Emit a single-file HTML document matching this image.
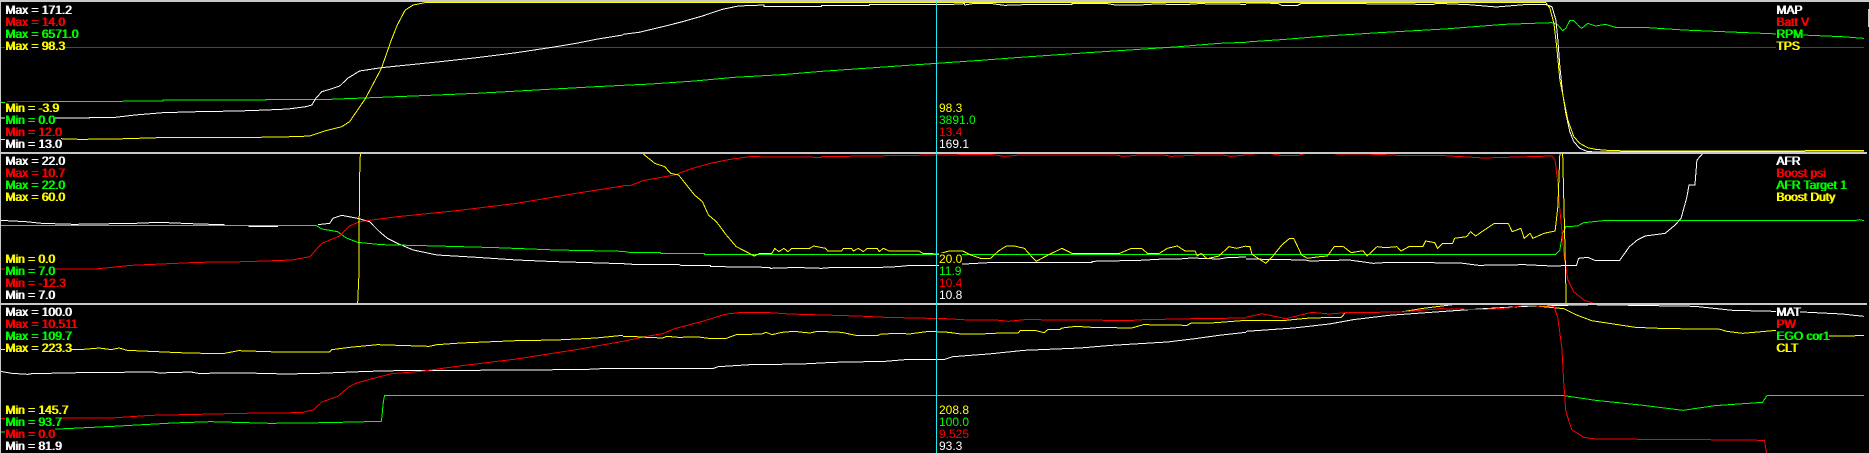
<!DOCTYPE html>
<html><head><meta charset="utf-8"><style>
html,body{margin:0;padding:0;background:#000;width:1869px;height:453px;overflow:hidden}
svg{position:absolute;left:0;top:0}
polyline{fill:none;stroke-width:1;vector-effect:non-scaling-stroke;stroke-linejoin:round}
.w{stroke:#fff}.r{stroke:#f00}.g{stroke:#0f0}.y{stroke:#ff0}
div{position:absolute;font:12px/12px "Liberation Sans",sans-serif;background:#000;white-space:pre;height:12px}
.l{left:5px;text-shadow:1px 0 0 currentColor}
.c{left:939px}
.t{left:1776px;text-shadow:1px 0 0 currentColor}
.W{color:#fff}.R{color:#f00}.G{color:#0f0}.Y{color:#ff0}
</style></head><body>
<svg width="1869" height="453" shape-rendering="crispEdges">
<clipPath id="p1"><rect x="1" y="2" width="1863" height="150"/></clipPath>
<clipPath id="p2"><rect x="1" y="154" width="1863" height="149"/></clipPath>
<clipPath id="p3"><rect x="1" y="305" width="1863" height="148"/></clipPath>

<g clip-path="url(#p1)">
<line x1="1" y1="47.5" x2="1864" y2="47.5" stroke="#e00" stroke-width="1"/>
<g transform="translate(0,0) scale(.39730,.33333)">
<polyline class="g" points="0,307 145,305 410,303 410,300 670,300 670,298 830,298 1000,290 1200,280 1350,270 1500,260 1568,256"/>
<polyline class="w" points="0,354 225,354 225,352 290,352 340,345 410,338 500,335 600,333 670,330 725,327 770,320 785,315 795,295 810,275 830,268 855,258 875,235 905,213 960,203 1100,186 1200,173 1300,158 1400,140 1450,130 1500,118 1568,105"/>
<polyline class="y" points="0,418 150,416 200,418 290,417 400,413 500,413 600,413 740,410 780,408 820,392 860,380 880,365 900,330 920,295 960,205 985,120 1000,75 1020,30 1040,15 1070,8 1568,8"/>
</g>
<g transform="translate(623,0) scale(.39730,.33333)">
<polyline class="g" points="0,256 70,252 180,243 280,232 400,224 500,214 620,204 790,190 900,181 1000,172 1170,158 1300,148 1400,140 1500,130 1568,127"/>
<polyline class="w" points="0,103 40,97 100,80 150,65 200,48 250,28 290,18 355,15 355,20 500,20 500,16 620,16 620,13 790,13 830,13 860,11 860,15 880,11 930,11 960,16 1010,14 1130,14 1130,11 1220,11 1240,15 1300,15 1340,12 1410,14 1450,11 1568,13"/>
<polyline class="y" points="0,8 1568,8"/>
</g>
<g transform="translate(1246,0) scale(.39730,.33333)">
<polyline class="g" points="0,126 100,118 200,108 350,97 500,87 650,73 770,68 785,75 797,92 805,85 815,62 825,62 835,75 845,85 860,70 880,78 905,73 930,82 1000,82 1100,90 1200,95 1300,100 1400,105 1500,110 1555,115"/>
<polyline class="w" points="0,9 80,10 90,16 130,16 140,10 400,12 470,14 480,10 560,14 630,21 700,14 755,14 770,20 780,60 785,120 790,200 797,280 805,340 815,395 825,425 840,445 860,455 900,456 1555,456"/>
<polyline class="y" points="0,8 755,8 765,25 775,70 782,140 790,240 800,300 810,360 825,410 840,430 860,443 880,448 920,452 1000,453 1555,452"/>
</g>
</g>

<g clip-path="url(#p2)">
<g transform="translate(0,150) scale(.39730,.33333)">
<polyline class="w" points="0,211 65,215 105,220 185,223 340,220 400,217 500,222 565,224"/>
<polyline class="w" points="625,229 700,229"/>
<polyline class="w" points="800,224 830,220 838,205 860,196 900,205 930,215 955,245 975,265 1000,280 1040,300 1100,315 1200,322 1300,330 1400,335 1568,341"/>
<polyline class="g" points="0,226 795,226 810,237 850,245 870,263 900,277 960,284 1100,288 1250,293 1400,300 1568,304"/>
<polyline class="r" points="0,357 240,357 330,346 500,337 620,335 735,330 780,320 810,280 855,258 880,228 905,215 1000,200 1150,182 1300,160 1450,130 1568,108"/>
<polyline class="y" points="1568,11 907,11 905,85 903,385 900,465"/>
</g>
<g transform="translate(623,150) scale(.39730,.33333)">
<polyline class="g" points="0,304 15,307 95,307 95,310 205,310 205,313 1568,313"/>
<polyline class="w" points="0,341 25,343 140,343 145,346 220,346 220,349 280,351 370,352 370,355 420,353 450,353 500,355 530,352 650,352 690,350 725,346 795,346 860,342 920,338 1180,338 1180,334 1300,331 1360,327 1400,327 1430,324 1500,327 1520,323 1568,321"/>
<polyline class="r" points="0,106 20,106 50,92 130,75 170,57 220,40 270,28 320,20 500,22 500,20 790,15 860,14 930,14 960,19 1000,15 1240,15 1260,19 1300,15 1360,15 1380,19 1450,15 1510,15 1530,19 1568,15"/>
<polyline class="y" points="0,11 50,11 80,40 105,50 120,70 140,75 160,105 180,135 200,155 215,195 235,215 260,255 285,290 310,305 330,318 345,310 375,310 382,295 392,305 405,295 415,305 425,295 470,295 480,288 510,295 515,303 550,303 555,295 575,295 580,303 592,295 605,305 615,295 640,295 645,305 655,295 670,303 745,303 755,310 795,312 820,303 855,303 875,315 900,325 925,325 945,303 965,288 985,288 1010,295 1025,315 1040,334 1070,315 1105,295 1130,310 1250,310 1280,295 1305,295 1320,310 1350,310 1370,295 1395,288 1415,303 1440,303 1445,318 1455,310 1470,326 1500,318 1525,290 1545,295 1568,288"/>
</g>
<g transform="translate(1246,150) scale(.39730,.33333)">
<polyline class="g" points="0,313 780,313 790,300 797,250 805,230 835,228 850,218 900,212 1530,212 1545,209 1555,212"/>
<polyline class="w" points="0,327 150,330 160,333 260,330 320,340 360,337 540,339 585,346 700,344 770,348 832,346 837,325 860,322 880,332 940,332 965,290 985,270 1005,258 1055,250 1080,225 1095,205 1110,140 1115,105 1130,105 1135,30 1150,10"/>
<polyline class="r" points="0,12 60,10 90,17 130,17 150,10 330,13 400,17 500,17 600,24 770,18 778,30 785,100 790,180 795,240 800,310 810,390 825,425 850,450 875,460"/>
<polyline class="y" points="0,290 10,290 15,313 50,340 70,315 90,285 110,265 120,265 140,315 155,325 185,320 205,318 222,290 245,290 265,308 290,303 295,303 305,318 330,290 350,293 380,290 390,303 410,290 445,290 452,273 475,278 482,295 495,280 520,280 525,265 555,260 565,245 578,258 600,240 625,220 660,220 670,245 692,235 700,265 715,250 722,265 750,250 778,243 785,170 790,10 797,10 803,300 806,465"/>
</g>
</g>

<g clip-path="url(#p3)">
<g transform="translate(0,298) scale(.39730,.33333)">
<polyline class="w" points="0,220 30,226 70,229 80,227 200,224 385,222 400,225 480,222 500,226 620,225 720,228 800,226 930,220 1000,218 1340,216 1480,214 1530,211 1568,211"/>
<polyline class="g" points="0,402 130,394 285,385 435,375 530,371 680,376 820,374 960,370 965,310 968,292 1568,292"/>
<polyline class="r" points="0,361 280,360 380,352 500,349 650,345 760,344 790,335 810,312 850,295 880,265 900,254 950,238 985,227 1060,220 1150,205 1300,183 1450,155 1568,130"/>
<polyline class="y" points="0,155 200,155 250,150 280,155 300,150 320,157 470,165 560,167 570,165 600,158 700,162 830,162 835,155 880,148 950,140 1080,145 1100,140 1160,135 1300,128 1400,126 1500,120 1568,112"/>
</g>
<g transform="translate(623,298) scale(.39730,.33333)">
<polyline class="g" points="0,292 1568,292"/>
<polyline class="w" points="0,211 228,211 240,206 320,200 450,198 530,193 660,190 710,185 810,184 830,176 920,168 1010,157 1150,150 1230,142 1370,132 1440,122 1500,112 1568,103"/>
<polyline class="r" points="0,130 60,115 100,107 130,92 200,70 260,48 300,43 355,43 420,48 590,54 660,58 810,62 870,66 940,66 970,70 1010,65 1170,66 1270,68 1310,65 1440,62 1568,60"/>
<polyline class="y" points="0,115 20,115 60,118 100,120 110,115 140,118 190,117 215,121 260,121 285,110 350,108 360,103 375,110 400,103 430,100 470,105 490,100 550,103 590,113 640,113 650,108 700,106 720,108 770,100 820,103 850,108 900,108 950,105 995,105 1000,97 1040,98 1060,104 1070,94 1100,94 1105,90 1140,85 1180,88 1280,90 1310,80 1420,82 1430,75 1480,75 1568,67"/>
</g>
<g transform="translate(1246,298) scale(.39730,.33333)">
<polyline class="g" points="0,292 795,292 880,307 1000,322 1100,337 1180,323 1300,313 1312,292 1555,292"/>
<polyline class="w" points="0,100 120,90 210,78 270,65 360,52 500,40 600,32 700,25 870,20 1130,25 1225,37 1400,42 1500,48 1555,55"/>
<polyline class="y" points="0,67 100,67 160,60 240,58 250,44 390,42 440,32 520,20 640,20 680,18 800,32 830,50 870,68 980,88 1060,92 1190,93 1210,100 1250,106 1335,97 1470,114 1555,113"/>
<polyline class="r" points="0,58 40,47 100,62 165,43 210,48 250,44 390,42 490,32 590,35 660,30 700,22 775,25 785,60 795,150 800,260 805,340 820,395 850,418 880,423 1150,425 1305,427 1310,465"/>
</g>
</g>

<rect x="0" y="0" width="1869" height="2" fill="#c8c8c8"/>
<rect x="0" y="152" width="1867" height="2" fill="#c8c8c8"/>
<rect x="0" y="303" width="1867" height="2" fill="#c8c8c8"/>
<rect x="0" y="0" width="1" height="453" fill="#c8c8c8"/>
<rect x="1868" y="9" width="1" height="18" fill="#c8c8c8"/>
<rect x="936" y="2" width="1" height="451" fill="#20e8f0"/>
</svg>

<div class="l W" style="top:4px">Max = 171.2</div>
<div class="l R" style="top:16px">Max = 14.0</div>
<div class="l G" style="top:28px">Max = 6571.0</div>
<div class="l Y" style="top:40px">Max = 98.3</div>
<div class="l Y" style="top:102px">Min = -3.9</div>
<div class="l G" style="top:114px">Min = 0.0</div>
<div class="l R" style="top:126px">Min = 12.0</div>
<div class="l W" style="top:138px">Min = 13.0</div>

<div class="c Y" style="top:102px">98.3</div>
<div class="c G" style="top:114px">3891.0</div>
<div class="c R" style="top:126px">13.4</div>
<div class="c W" style="top:138px">169.1</div>

<div class="t W" style="top:4px">MAP</div>
<div class="t R" style="top:16px">Batt V</div>
<div class="t G" style="top:28px">RPM</div>
<div class="t Y" style="top:40px">TPS</div>

<div class="l W" style="top:155px">Max = 22.0</div>
<div class="l R" style="top:167px">Max = 10.7</div>
<div class="l G" style="top:179px">Max = 22.0</div>
<div class="l Y" style="top:191px">Max = 60.0</div>
<div class="l Y" style="top:253px">Min = 0.0</div>
<div class="l G" style="top:265px">Min = 7.0</div>
<div class="l R" style="top:277px">Min = -12.3</div>
<div class="l W" style="top:289px">Min = 7.0</div>

<div class="c Y" style="top:253px">20.0</div>
<div class="c G" style="top:265px">11.9</div>
<div class="c R" style="top:277px">10.4</div>
<div class="c W" style="top:289px">10.8</div>

<div class="t W" style="top:155px">AFR</div>
<div class="t R" style="top:167px">Boost psi</div>
<div class="t G" style="top:179px">AFR Target 1</div>
<div class="t Y" style="top:191px">Boost Duty</div>

<div class="l W" style="top:306px">Max = 100.0</div>
<div class="l R" style="top:318px">Max = 10.511</div>
<div class="l G" style="top:330px">Max = 109.7</div>
<div class="l Y" style="top:342px">Max = 223.3</div>
<div class="l Y" style="top:404px">Min = 145.7</div>
<div class="l G" style="top:416px">Min = 93.7</div>
<div class="l R" style="top:428px">Min = 0.0</div>
<div class="l W" style="top:440px">Min = 81.9</div>

<div class="c Y" style="top:404px">208.8</div>
<div class="c G" style="top:416px">100.0</div>
<div class="c R" style="top:428px">9.525</div>
<div class="c W" style="top:440px">93.3</div>

<div class="t W" style="top:306px">MAT</div>
<div class="t R" style="top:318px">PW</div>
<div class="t G" style="top:330px">EGO cor1</div>
<div class="t Y" style="top:342px">CLT</div>
</body></html>
